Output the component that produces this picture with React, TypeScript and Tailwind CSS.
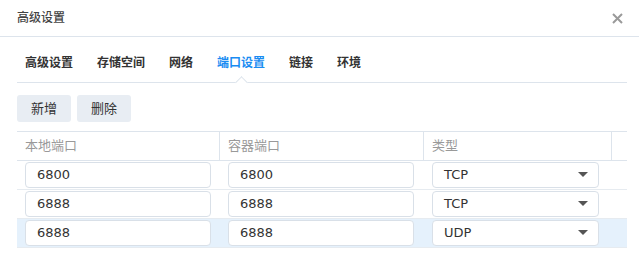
const tabs = ['高级设置', '存储空间', '网络', '端口设置', '链接', '环境']
const rows = [
  { local: '6800', container: '6800', type: 'TCP' },
  { local: '6888', container: '6888', type: 'TCP' },
  { local: '6888', container: '6888', type: 'UDP' },
]

const font = { fontFamily: '"DejaVu Sans", "Noto Sans CJK SC", sans-serif' }

export default function App() {
  return (
    <div className="w-[639px] h-[279px] bg-white text-[#333] overflow-hidden" style={font}>
      {/* Header */}
      <div className="h-[37px] border-b border-[#dde4ec] flex items-center justify-between pl-[17px] pr-[16px]">
        <span className="text-[12px] leading-[16px] font-medium text-[#444]">高级设置</span>
        <svg width="11" height="11" viewBox="0 0 11 11">
          <path d="M1 1 L10 10 M10 1 L1 10" stroke="#9a9a9a" strokeWidth="2" />
        </svg>
      </div>

      <div className="pl-[17px] pr-[12px]">
        {/* Tabs */}
        <div className="relative flex gap-6 pl-[8px] pt-[18px] pb-[11px] border-b border-[#dde4ec] text-[12px] leading-[16px]">
          {tabs.map(t => (
            <div key={t} className="relative h-[16px]">
              <span className={`font-semibold ${t === '端口设置' ? 'text-[#1a8cf2]' : 'text-[#333]'}`}>{t}</span>
              {t === '端口设置' && (
                <span className="absolute left-1/2 -bottom-[16px] w-[9px] h-[9px] -ml-[4.5px] rotate-45 bg-white border-t border-l border-[#dde4ec]" />
              )}
            </div>
          ))}
        </div>

        {/* Buttons */}
        <div className="flex gap-[6px] mt-[12px]">
          <button className="w-[54px] h-[27px] rounded-[3px] bg-[#e8edf3] text-[13px] leading-[16px] text-[#333]">新增</button>
          <button className="w-[54px] h-[27px] rounded-[3px] bg-[#e8edf3] text-[13px] leading-[16px] text-[#333]">删除</button>
        </div>

        {/* Table */}
        <div className="mt-[9px] border-t border-[#dde4ec] text-[13px] leading-[16px]">
          <div className="grid grid-cols-[202px_204px_188px_16px] h-[29px] border-b border-[#dde4ec] text-[#999]">
            <div className="pl-[8px] flex items-center">本地端口</div>
            <div className="pl-[8px] flex items-center border-l border-[#dde4ec]">容器端口</div>
            <div className="pl-[8px] flex items-center border-l border-[#dde4ec]">类型</div>
            <div className="border-l border-[#dde4ec]" />
          </div>
          {rows.map((r, i) => (
            <div
              key={i}
              className={`grid grid-cols-[202px_204px_188px_16px] h-[29px] items-center border-b border-[#e6ebf0] ${
                i === 2 ? 'bg-[#e5f1fc]' : 'bg-white'
              }`}
            >
              <div className="pl-[8px] pr-[8px]">
                <div className="h-[26px] bg-white border border-[#d9e0e8] rounded-[4px] pl-[11px] flex items-center text-[#333]">
                  {r.local}
                </div>
              </div>
              <div className="pl-[9px] pr-[9px]">
                <div className="h-[26px] bg-white border border-[#d9e0e8] rounded-[4px] pl-[11px] flex items-center text-[#333]">
                  {r.container}
                </div>
              </div>
              <div className="pl-[9px] pr-[12px]">
                <div className="h-[26px] bg-white border border-[#d9e0e8] rounded-[4px] pl-[11px] pr-[10px] flex items-center justify-between text-[#333]">
                  <span>{r.type}</span>
                  <svg width="10" height="6" viewBox="0 0 10 6">
                    <path d="M0 0 L10 0 L5 5 Z" fill="#555" />
                  </svg>
                </div>
              </div>
              <div />
            </div>
          ))}
        </div>
      </div>
    </div>
  )
}
